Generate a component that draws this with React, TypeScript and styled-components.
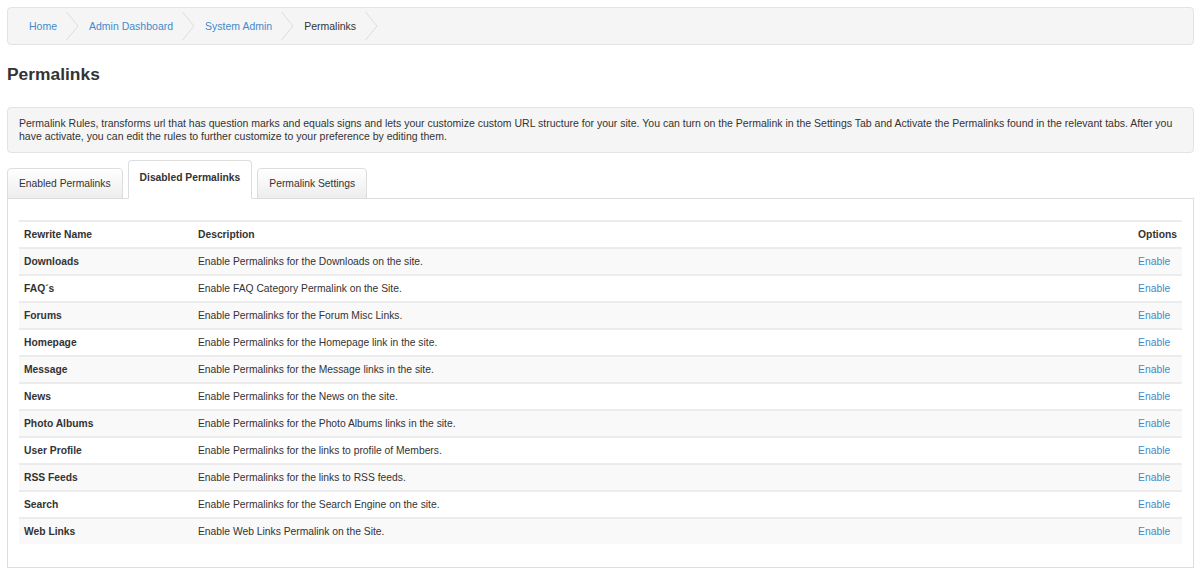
import React from "react";
import styled, { createGlobalStyle } from "styled-components";

const GlobalStyle = createGlobalStyle`
  html, body { margin: 0; padding: 0; background: #fff; }
  body {
    font-family: "Liberation Sans", Arial, sans-serif;
    font-size: 10.3px;
    color: #333;
  }
`;

const Page = styled.div`
  padding: 7px 6px 7px 7px;
`;

const Crumbs = styled.nav`
  display: flex;
  align-items: center;
  height: 36px;
  padding: 0 0 0 21px;
  background: #f5f5f5;
  border: 1px solid #e3e3e3;
  border-radius: 4px;
  font-size: 10.5px;
`;

const Crumb = styled.a<{ $current?: boolean }>`
  color: ${(p) => (p.$current ? "#333" : "#428bca")};
  text-decoration: none;
  line-height: 13px;
`;

const Sep = styled.svg`
  display: block;
  width: 13px;
  height: 28px;
  margin: 0 10px 0 9px;
`;

const Title = styled.h1`
  margin: 19px 0 22px;
  font-size: 17.4px;
  line-height: 21px;
  font-weight: bold;
  color: #333;
`;

const Info = styled.div`
  padding: 9px 11px;
  background: #f5f5f5;
  border: 1px solid #e3e3e3;
  border-radius: 4px;
  line-height: 13px;
  font-size: 10.5px;
`;

const TabRow = styled.div`
  display: flex;
  align-items: flex-end;
  gap: 5px;
  margin-top: 7px;
  position: relative;
  z-index: 1;
  margin-bottom: -1px;
`;

const Tab = styled.div<{ $active?: boolean }>`
  display: flex;
  align-items: center;
  height: ${(p) => (p.$active ? "39px" : "31px")};
  box-sizing: border-box;
  padding: 0 11px;
  border: 1px solid #ddd;
  border-bottom-color: ${(p) => (p.$active ? "#fff" : "#ddd")};
  border-radius: 4px 4px 0 0;
  background: ${(p) =>
    p.$active ? "#fff" : "linear-gradient(to bottom, #ffffff 0%, #ededed 100%)"};
  font-weight: ${(p) => (p.$active ? "bold" : "normal")};
  color: #333;
  padding-bottom: ${(p) => (p.$active ? "4px" : "0")};
`;

const Panel = styled.div`
  border: 1px solid #ddd;
  padding: 21px 11px 21px 11px;
  height: 326px;
`;

const Table = styled.table`
  width: 100%;
  border-collapse: collapse;
  border-top: 2px solid #ececec;
`;

const Th = styled.th`
  text-align: left;
  font-weight: bold;
  padding: 6px 5px 6px;
  line-height: 13px;
  color: #333;
`;

const Row = styled.tr<{ $striped?: boolean }>`
  background: ${(p) => (p.$striped ? "#f9f9f9" : "#fff")};
  border-top: 2px solid #ececec;
`;

const Td = styled.td<{ $bold?: boolean }>`
  text-align: left;
  font-weight: ${(p) => (p.$bold ? "bold" : "normal")};
  padding: 6px 5px;
  line-height: 13px;
  white-space: nowrap;
`;

const NameCol = styled.col`
  width: 174px;
`;

const OptionsCol = styled.col`
  width: 45px;
`;

const Link = styled.a`
  color: #428bca;
  text-decoration: none;
`;

const Chevron = () => (
  <Sep viewBox="0 0 13 28">
    <polyline points="0.5,0 12,14 0.5,28" fill="none" stroke="#dcdcdc" strokeWidth="1" />
  </Sep>
);

const rules: [string, string][] = [
  ["Downloads", "Enable Permalinks for the Downloads on the site."],
  ["FAQ´s", "Enable FAQ Category Permalink on the Site."],
  ["Forums", "Enable Permalinks for the Forum Misc Links."],
  ["Homepage", "Enable Permalinks for the Homepage link in the site."],
  ["Message", "Enable Permalinks for the Message links in the site."],
  ["News", "Enable Permalinks for the News on the site."],
  ["Photo Albums", "Enable Permalinks for the Photo Albums links in the site."],
  ["User Profile", "Enable Permalinks for the links to profile of Members."],
  ["RSS Feeds", "Enable Permalinks for the links to RSS feeds."],
  ["Search", "Enable Permalinks for the Search Engine on the site."],
  ["Web Links", "Enable Web Links Permalink on the Site."],
];

export default function App() {
  return (
    <Page>
      <GlobalStyle />
      <Crumbs>
        <Crumb href="#">Home</Crumb>
        <Chevron />
        <Crumb href="#">Admin Dashboard</Crumb>
        <Chevron />
        <Crumb href="#">System Admin</Crumb>
        <Chevron />
        <Crumb $current>Permalinks</Crumb>
        <Chevron />
      </Crumbs>

      <Title>Permalinks</Title>

      <Info>
        Permalink Rules, transforms url that has question marks and equals signs and lets your
        customize custom URL structure for your site. You can turn on the Permalink in the Settings
        Tab and Activate the Permalinks found in the relevant tabs. After you have activate, you can
        edit the rules to further customize to your preference by editing them.
      </Info>

      <TabRow>
        <Tab>Enabled Permalinks</Tab>
        <Tab $active>Disabled Permalinks</Tab>
        <Tab>Permalink Settings</Tab>
      </TabRow>

      <Panel>
        <Table>
          <colgroup>
            <NameCol />
            <col />
            <OptionsCol />
          </colgroup>
          <thead>
            <tr>
              <Th>Rewrite Name</Th>
              <Th>Description</Th>
              <Th>Options</Th>
            </tr>
          </thead>
          <tbody>
            {rules.map(([name, desc], i) => (
              <Row key={name} $striped={i % 2 === 0}>
                <Td $bold>{name}</Td>
                <Td>{desc}</Td>
                <Td>
                  <Link href="#">Enable</Link>
                </Td>
              </Row>
            ))}
          </tbody>
        </Table>
      </Panel>
    </Page>
  );
}
